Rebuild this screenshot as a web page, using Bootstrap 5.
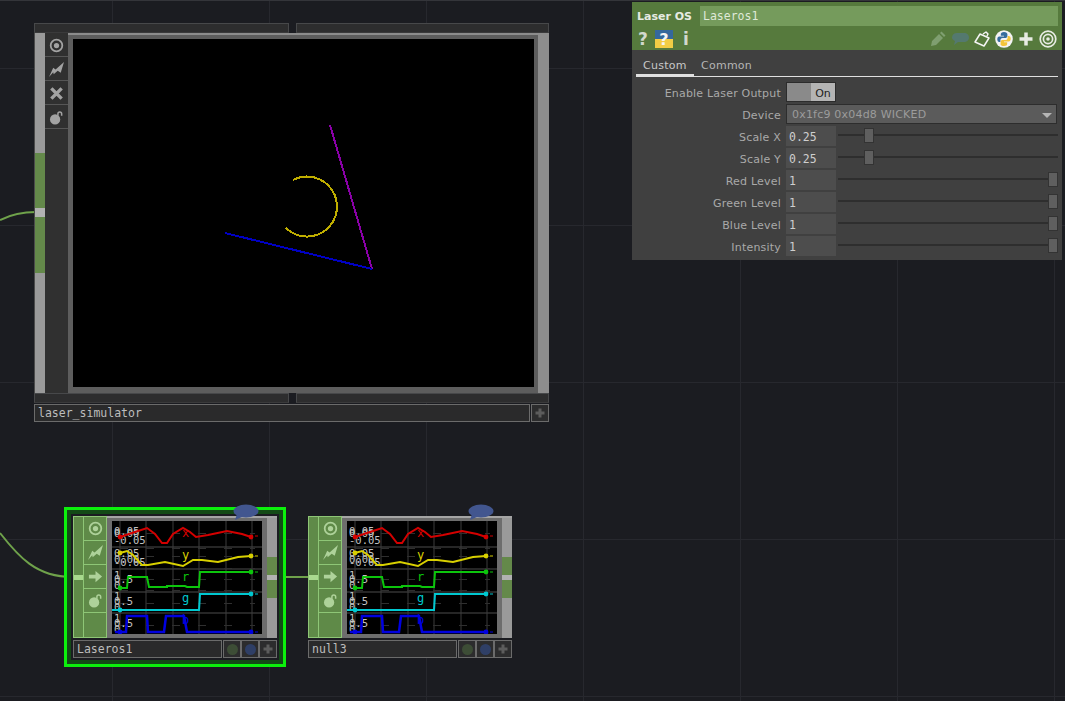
<!DOCTYPE html>
<html lang="en">

<head>
    <meta charset="UTF-8" />
    <meta name="viewport" content="width=device-width, initial-scale=1.0" />
    <title>Laser OS network</title>
    <link href="https://cdn.jsdelivr.net/npm/bootstrap@5.3.3/dist/css/bootstrap.min.css" rel="stylesheet" />
    <style>
        html, body {
            margin: 0;
            height: 100%;
            overflow: hidden;
            background: #1b1c21;
        }

        .net {
            position: relative;
            width: 1065px;
            height: 701px;
            overflow: hidden;
            border-top: 1px solid #34353a;
            background-color: #1b1c21;
            background-image:
                linear-gradient(to right, #27282e 1px, transparent 1px),
                linear-gradient(to bottom, #27282e 1px, transparent 1px);
            background-size: 157px 157px;
            background-position: 112px 0, 0 67px;
            font-family: "DejaVu Sans", sans-serif;
        }

        .wires {
            position: absolute;
            left: 0;
            top: -1px;
            width: 1065px;
            height: 701px;
        }

        .mono {
            font-family: "DejaVu Sans Mono", monospace;
        }

        /* nodes */
        .op-node {
            position: absolute;
        }

        .op-sim {
            left: 34px;
            top: 22px;
            width: 515px;
        }

        .op-laser {
            left: 73px;
            top: 515px;
            width: 204px;
        }

        .op-null {
            left: 308px;
            top: 515px;
            width: 204px;
        }

        .op-select {
            position: absolute;
            left: 64px;
            top: 506px;
            width: 222px;
            height: 160px;
            border: 3px solid #0cf00c;
            background: #1b1c21;
            box-shadow: inset 0 0 0 4px #134a16;
        }

        .op-band {
            height: 10px;
        }

        .op-band > div {
            background: #2d2d2e;
            border: 1px solid #47484a;
            border-bottom-color: #3a3a3b;
        }

        .op-band .seg-a {
            width: 255px;
        }

        .op-band .seg-b {
            width: 253px;
        }

        .op-sim .op-main {
            height: 360px;
        }

        .op-small .op-main {
            height: 122px;
        }

        .op-strip {
            width: 10px;
            background: #9a9a9a;
            flex: none;
        }

        .op-sim .op-strip.left {
            width: 11px;
            border-left: 1px solid #4b4b4b;
        }

        .op-sim .op-strip.right {
            width: 11px;
            background: #8d8d8d;
        }

        .op-small .op-strip.right {
            border-top: 2px solid #a5a5a5;
        }

        .strip-green {
            background: #64894a;
        }

        .strip-joint {
            background: #b2b2b2;
        }

        .sim-gray { height: 120px; }
        .sim-g1 { height: 55px; }
        .sim-j { height: 9px; }
        .sim-g2 { height: 56px; }
        .small-gray { height: 39px; }
        .small-g { height: 18px; }
        .small-j { height: 5px; }

        .left-green {
            background: #5f8a48;
            border: 1px solid #8ec676;
            border-right: none;
        }

        .joint-green {
            height: 5px;
            margin-top: 58px;
            background: #a9d98e;
        }

        .op-icons {
            width: 23px;
            flex: none;
            background: #303030;
            color: #a3a3a3;
        }

        .op-small .op-icons {
            width: 24px;
            background: #5f8a48;
            color: #aed29a;
            border: 1px solid #8ec676;
        }

        .op-cell {
            height: 24px;
            border-bottom: 1px solid #565656;
        }

        .op-sim .op-cell {
            padding-top: 2px;
        }

        .op-small .op-cell {
            border-bottom-color: #8ec676;
        }

        .op-cell svg {
            width: 15px;
            height: 15px;
        }

        .op-view {
            flex: 1;
            min-width: 0;
            background: #5d5d5d;
            border-top: 2px solid #8c8c8c;
            padding: 4px 5px 6px;
        }

        .op-small .op-view {
            background: #6d6d6d;
            border-top-color: #a5a5a5;
            padding: 3px 5px 4px;
        }

        .sim-screen {
            display: block;
            width: 461px;
            height: 348px;
            background: #000;
        }

        .chart-box {
            display: block;
            width: 150px;
            height: 113px;
            background: #000;
        }

        .op-name {
            height: 18px;
            margin-top: 1px;
        }

        .op-small .op-name {
            margin-top: 2px;
        }

        .name-box {
            flex: 1;
            min-width: 0;
            margin-right: 1px;
            padding-left: 3px;
            border: 1px solid #6b6b6b;
            background: #2a2a2b;
            color: #bdbdbd;
            font-size: 11.5px;
            line-height: 17px;
        }

        .name-btn {
            width: 18px;
            border: 1px solid #6b6b6b;
            background: #2c2c2d;
            color: #5c5c5c;
            flex: none;
        }

        .name-btn svg {
            width: 12px;
            height: 12px;
            filter: blur(.4px);
        }

        .dot {
            width: 11px;
            height: 11px;
            border-radius: 50%;
            filter: blur(.5px);
        }

        .dot-green { background: #3d4d36; }
        .dot-blue { background: #2f3f66; }

        .bubble {
            position: absolute;
            left: 233px;
            top: 503px;
            width: 26px;
            height: 17px;
        }

        .bubble-two {
            left: 468px;
        }

        /* parameter dialog */
        .par-win {
            position: absolute;
            left: 632px;
            top: 1px;
            width: 430px;
            height: 258px;
            background: #404040;
            color: #a9a9a9;
            font-size: 11px;
        }

        .par-head {
            height: 48px;
            background: #567a3d;
        }

        .par-title {
            width: 68px;
            padding-left: 5px;
            color: #e6ebe2;
            font-weight: 700;
            line-height: 21px;
        }

        .par-field {
            width: 358px;
            height: 20px;
            padding-left: 3px;
            background: #759b5c;
            color: #dfe9d8;
            font-size: 11.5px;
            line-height: 21px;
        }

        .par-top {
            padding-top: 4px;
        }

        .par-tools {
            height: 24px;
            padding: 0 4px 0 5px;
        }

        .glyph {
            width: 12px;
            color: #d2d8cd;
            font-size: 17px;
            font-weight: 700;
            line-height: 22px;
            text-align: center;
        }

        .tool-help {
            margin-left: 6px;
        }

        .tool-info {
            margin-left: 7px;
        }

        .tool-row {
            gap: 2px;
        }

        .tool-svg {
            width: 20px;
            height: 20px;
            display: block;
        }

        .par-tabs {
            height: 27px;
            margin: 0 4px;
            padding-top: 8px;
            border-bottom: 1px solid #e0e0e0;
            color: #b5b5b5;
            letter-spacing: .25px;
        }

        .par-tab {
            padding: 0 7px;
            width: 58px;
            line-height: 15px;
        }

        .par-tab.on {
            margin-bottom: -1px;
            border-bottom: 3px solid #e0e0e0;
            color: #c8c8c8;
        }

        .par-row {
            height: 22px;
            align-items: center;
        }

        .par-label {
            width: 149px;
            flex: none;
            margin-right: 5px;
            padding-top: 4px;
            text-align: right;
            letter-spacing: .2px;
        }

        .par-rows {
            padding-top: 4px;
        }

        .par-toggle {
            width: 50px;
            height: 20px;
            border: 1px solid #2c2c2c;
        }

        .par-toggle span {
            width: 50%;
            padding-top: 1px;
            line-height: 19px;
            text-align: center;
            color: #222;
            background: #b4b4b4;
        }

        .par-toggle span:first-child {
            background: #8a8a8a;
        }

        .par-select {
            width: 271px;
            height: 20px;
            padding: 2px 4px 0 5px;
            border: 1px solid #2d2d2d;
            background: #5b5b5b;
            color: #9c9c9c;
            line-height: 18px;
            letter-spacing: .2px;
        }

        .caret-down {
            width: 0;
            height: 0;
            border-left: 5px solid transparent;
            border-right: 5px solid transparent;
            border-top: 5px solid #b5b5b5;
        }

        .par-num {
            width: 50px;
            height: 20px;
            flex: none;
            padding-left: 3px;
            background: #4d4d4d;
            color: #cfcfcf;
            font-size: 11.5px;
            line-height: 22px;
        }

        .par-slider {
            position: relative;
            width: 220px;
            height: 16px;
            margin-left: 2px;
        }

        .par-slider::before {
            content: "";
            position: absolute;
            left: 0;
            right: 0;
            top: 6px;
            height: 2px;
            background: #2e2e2e;
        }

        .par-thumb {
            position: absolute;
            top: 0;
            width: 10px;
            height: 15px;
            background: #5f5f5f;
            border: 1px solid #333;
        }
    </style>
</head>

<body>
    <svg width="0" height="0" class="position-absolute">
        <symbol id="i-target" viewBox="0 0 16 16">
            <circle cx="8" cy="8" r="6.200" fill="none" stroke="currentColor" stroke-width="1.900" />
            <circle cx="8" cy="8" r="2.800" fill="currentColor" />
        </symbol>
        <symbol id="i-bolt" viewBox="0 0 16 16">
            <path fill="currentColor" d="M0 16 4.500 6l2.500 2L16 0l-3.500 11.500-3.200-2.300L5 13 4.500 11z" />
        </symbol>
        <symbol id="i-x" viewBox="0 0 16 16">
            <path fill="none" stroke="currentColor" stroke-width="3.600" d="M2.500 2.500 13.500 13.500M13.500 2.500 2.500 13.500" />
        </symbol>
        <symbol id="i-arrow" viewBox="0 0 16 16">
            <path fill="currentColor" d="M1 6h7V2l7 6-7 6v-4H1z" />
        </symbol>
        <symbol id="i-lock" viewBox="0 0 16 16">
            <circle cx="6.500" cy="10" r="5.500" fill="currentColor" />
            <path fill="none" stroke="currentColor" stroke-width="1.600" d="M9.500 6V4a2 2 0 0 1 4 0v2" />
        </symbol>
        <symbol id="i-plus" viewBox="0 0 16 16">
            <path fill="none" stroke="currentColor" stroke-width="4" d="M8 2v12M2 8h12" />
        </symbol>
        <symbol id="i-bubble" viewBox="0 0 26 17">
            <ellipse cx="13" cy="7" rx="12.500" ry="6.500" fill="#42568f" />
            <path fill="#42568f" d="M4 10 2 16l7-3z" />
        </symbol>
    </svg>

    <div class="net">
        <svg class="wires" viewBox="0 0 1065 701">
            <path fill="none" stroke="#6fa24b" stroke-width="2" d="M0 220C10 215 22 212 36 212" />
            <path fill="none" stroke="#6fa24b" stroke-width="2" d="M0 533C18 556 36 577 72 577" />
            <path fill="none" stroke="#6fa24b" stroke-width="2" d="M277 577H309" />
        </svg>

        <!-- laser_simulator -->
        <div class="op-node op-sim">
            <div class="op-band d-flex justify-content-between">
                <div class="seg-a"></div>
                <div class="seg-b"></div>
            </div>
            <div class="op-main d-flex">
                <div class="op-strip left">
                    <div class="sim-gray"></div>
                    <div class="sim-g1 strip-green"></div>
                    <div class="sim-j strip-joint"></div>
                    <div class="sim-g2 strip-green"></div>
                </div>
                <div class="op-icons">
                    <div class="op-cell d-flex align-items-center justify-content-center"><svg><use href="#i-target" /></svg></div>
                    <div class="op-cell d-flex align-items-center justify-content-center"><svg><use href="#i-bolt" /></svg></div>
                    <div class="op-cell d-flex align-items-center justify-content-center"><svg><use href="#i-x" /></svg></div>
                    <div class="op-cell d-flex align-items-center justify-content-center"><svg><use href="#i-lock" /></svg></div>
                </div>
                <div class="op-view">
                    <svg class="sim-screen" viewBox="73 39 461 348" shape-rendering="crispEdges">
                        <path fill="none" stroke="#8a00a8" stroke-width="2" d="M330 125 372 269" />
                        <path fill="none" stroke="#0000c4" stroke-width="2" d="M225 233 372 269" />
                        <path fill="none" stroke="#bfae00" stroke-width="2" d="M293 180A30 30 0 1 1 286 228" />
                    </svg>
                </div>
                <div class="op-strip right"></div>
            </div>
            <div class="op-band d-flex justify-content-between">
                <div class="seg-a"></div>
                <div class="seg-b"></div>
            </div>
            <div class="op-name d-flex">
                <div class="name-box mono">laser_simulator</div>
                <div class="name-btn d-flex align-items-center justify-content-center"><svg><use href="#i-plus" /></svg></div>
            </div>
        </div>

        <!-- Laseros1 -->
        <div class="op-select"></div>
        <div class="op-node op-small op-laser" data-name="Laseros1"></div>
        <svg class="bubble"><use href="#i-bubble" /></svg>

        <!-- null3 -->
        <div class="op-node op-small op-null" data-name="null3"></div>
        <svg class="bubble bubble-two"><use href="#i-bubble" /></svg>

        <!-- parameter dialog -->
        <div class="par-win">
            <div class="par-head">
                <div class="par-top d-flex">
                    <div class="par-title">Laser OS</div>
                    <div class="par-field mono">Laseros1</div>
                </div>
                <div class="par-tools d-flex align-items-center">
                    <div class="glyph">?</div>
                    <svg class="tool-help" width="18" height="18" viewBox="0 0 18 18">
                        <rect width="18" height="9" fill="#35689c" />
                        <rect y="9" width="18" height="9" fill="#f2cd45" />
                        <text x="9" y="15" text-anchor="middle" font-family="DejaVu Sans" font-weight="700" font-size="16" fill="#f4f4f4">?</text>
                    </svg>
                    <div class="glyph tool-info">i</div>
                    <div class="tool-row d-flex align-items-center ms-auto">
                        <svg class="tool-svg" viewBox="0 0 20 20"><path fill="#7f9f70" d="M3 17l1-5 7-7 4 4-7 7zM12 4l1.500-1.500 4 4L16 8z" /></svg>
                        <svg class="tool-svg" viewBox="0 0 20 20"><path fill="#54796f" d="M7 4h7c3 0 5 2 5 4.500S17 13 14 13H8l-4 3 1-4C3 11 2 10 2 8.500 2 6 4 4 7 4z" /></svg>
                        <svg class="tool-svg" viewBox="0 0 20 20"><path fill="none" stroke="#f4f4f4" stroke-width="1.500" stroke-linejoin="round" d="M8 5 17 9l-5 8-9-4zM11 5l3-2 2 2-1 2" /></svg>
                        <svg class="tool-svg" viewBox="0 0 20 20">
                            <circle cx="10" cy="10" r="8.800" fill="#f3f3f3" />
                            <path fill="#356c9e" d="M10 3c-2.300 0-3.200 1-3.200 2.300v1.400H10v.8H5.300C4 7.500 3.300 8.800 3.300 10.200s.7 2.800 2 2.800h1.100v-1.800c0-1.400 1.100-2.300 2.300-2.300h3c1 0 1.700-.7 1.700-1.800V5.300C13.400 4 12.300 3 10 3z" />
                            <path fill="#f2c53a" d="M10 17c2.300 0 3.200-1 3.200-2.300v-1.400H10v-.8h4.700c1.300 0 2-1.300 2-2.700s-.7-2.800-2-2.800h-1.100v1.800c0 1.400-1.100 2.300-2.300 2.300h-3c-1 0-1.700.7-1.700 1.800v2.800C6.600 16 7.700 17 10 17z" />
                        </svg>
                        <svg class="tool-svg" viewBox="0 0 20 20"><path fill="none" stroke="#e8ece4" stroke-width="3.500" d="M10 3.500v13M3.500 10h13" /></svg>
                        <svg class="tool-svg" viewBox="0 0 20 20">
                            <circle cx="10" cy="10" r="7.800" fill="none" stroke="#e8ece4" stroke-width="1.700" />
                            <circle cx="10" cy="10" r="4.600" fill="none" stroke="#e8ece4" stroke-width="1.700" />
                            <circle cx="10" cy="10" r="1.800" fill="#e8ece4" />
                        </svg>
                    </div>
                </div>
            </div>
            <div class="par-tabs d-flex">
                <div class="par-tab on">Custom</div>
                <div class="par-tab">Common</div>
            </div>
            <div class="par-rows" id="parRows">
                <div class="par-row d-flex">
                    <div class="par-label">Enable Laser Output</div>
                    <div class="par-toggle d-flex"><span></span><span>On</span></div>
                </div>
                <div class="par-row d-flex">
                    <div class="par-label">Device</div>
                    <div class="par-select d-flex align-items-center justify-content-between">
                        <span>0x1fc9 0x04d8 WICKED</span>
                        <i class="caret-down"></i>
                    </div>
                </div>
            </div>
        </div>
    </div>

    <script src="https://cdn.jsdelivr.net/npm/bootstrap@5.3.3/dist/js/bootstrap.bundle.min.js"></script>
    <script>
        const params = [
            { name: 'Scale X', value: '0.25', pos: 26 },
            { name: 'Scale Y', value: '0.25', pos: 26 },
            { name: 'Red Level', value: '1', pos: 210 },
            { name: 'Green Level', value: '1', pos: 210 },
            { name: 'Blue Level', value: '1', pos: 210 },
            { name: 'Intensity', value: '1', pos: 210 }
        ];

        document.getElementById('parRows').insertAdjacentHTML('beforeend', params.map(p => `
            <div class="par-row d-flex">
                <div class="par-label">${p.name}</div>
                <div class="par-num mono">${p.value}</div>
                <div class="par-slider"><div class="par-thumb" style="left: ${p.pos}px"></div></div>
            </div>`).join(''));

        // the five channels of the trail viewer, in chart pixels
        const channels = [
            { label: 'x', color: '#d40000', width: 2, labelY: 16, tick: 15,
              pts: '8,16 23,11 35,7 43,13 50,22 55,22 61,13 71,7 78,11 84,16 96,14 115,10 130,13 139,16',
              nums: [['0.05', 14], ['0.00', 16], ['-0.05', 23]] },
            { label: 'y', color: '#d8d000', width: 2, labelY: 38, tick: 35,
              pts: '8,32 15,30 21,34 30,44 36,44 53,41 71,45 81,39 90,39 106,41 126,36 139,35',
              nums: [['0.05', 36], ['0.00', 42], ['-0.05', 45]] },
            { label: 'r', color: '#0cc40c', width: 2, labelY: 60, tick: 51,
              pts: '8,67 15,67 16,56 35,56 37,66 55,66 55,65 73,65 75,66 87,66 88,51 139,51',
              nums: [['1', 58], ['0.5', 62], ['0', 68]] },
            { label: 'g', color: '#00c8d0', width: 2, labelY: 81, tick: 73,
              pts: '0,89 87,89 88,73 139,73',
              nums: [['1', 79], ['0.5', 84], ['0', 90]] },
            { label: 'b', color: '#0000e0', width: 2.5, labelY: 103, tick: 111,
              pts: '3,111 14,111 15,95 35,95 36,111 52,111 54,95 72,95 75,111 139,111',
              nums: [['1', 101], ['0.5', 106], ['0', 112]] }
        ];
        const grid = [8, 34, 61, 87, 114, 140];
        const lanes = [[25, 2], [47, 2], [70, 2], [91, 2]];
        const dashes = [12, 27, 35, 47, 58, 69, 82, 104];

        function chartSvg() {
            const gridLines = grid.map(x => `<path d="M${x} 0V113" stroke="#3c3c3c" />`).join('');
            const bands = lanes.map(l => `<rect y="${l[0]}" width="150" height="${l[1]}" fill="#262626" />`).join('');
            const dashLines = dashes.map(y => `<path d="M8 ${y + .5}H143" stroke="#2f2f2f" stroke-dasharray="8 18" />`).join('');
            const series = channels.map(c => {
                const last = c.pts.split(' ').pop().split(',');
                const first = c.pts.split(' ')[0].split(',');
                const numbers = c.nums.map(n => `<text x="2" y="${n[1]}" fill="#c4c4c4" font-size="10.500">${n[0]}</text>`).join('');
                return `${numbers}
                    <polyline points="${c.pts}" fill="none" stroke="${c.color}" stroke-width="${c.width}" />
                    <circle cx="8" cy="${first[1]}" r="2.400" fill="${c.color}" />
                    <circle cx="${last[0]}" cy="${last[1]}" r="2.400" fill="${c.color}" />
                    <path d="M143 ${c.tick}h3" stroke="${c.color}" />
                    <text x="70" y="${c.labelY}" fill="${c.color}" font-size="12">${c.label}</text>`;
            }).join('');
            return `<svg class="chart-box mono" viewBox="0 0 150 113">${bands}${gridLines}${dashLines}${series}</svg>`;
        }

        const iconNames = ['target', 'bolt', 'arrow', 'lock'];

        function renderNode(node) {
            const cells = iconNames.map(n =>
                `<div class="op-cell d-flex align-items-center justify-content-center"><svg><use href="#i-${n}" /></svg></div>`).join('');
            node.innerHTML = `
                <div class="op-main d-flex">
                    <div class="op-strip left-green"><div class="joint-green"></div></div>
                    <div class="op-icons">${cells}</div>
                    <div class="op-view">${chartSvg()}</div>
                    <div class="op-strip right">
                        <div class="small-gray"></div>
                        <div class="small-g strip-green"></div>
                        <div class="small-j strip-joint"></div>
                        <div class="small-g strip-green"></div>
                    </div>
                </div>
                <div class="op-name d-flex">
                    <div class="name-box mono">${node.dataset.name}</div>
                    <div class="name-btn d-flex align-items-center justify-content-center"><span class="dot dot-green"></span></div>
                    <div class="name-btn d-flex align-items-center justify-content-center"><span class="dot dot-blue"></span></div>
                    <div class="name-btn d-flex align-items-center justify-content-center"><svg><use href="#i-plus" /></svg></div>
                </div>`;
        }

        document.querySelectorAll('.op-small').forEach(renderNode);
    </script>
</body>

</html>
